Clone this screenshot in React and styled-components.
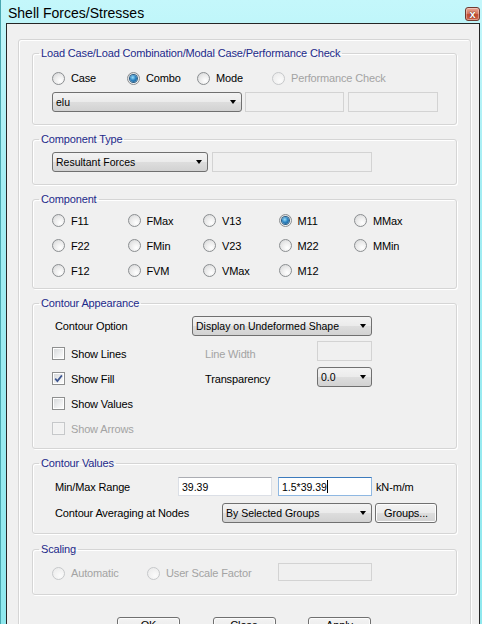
import React from 'react';
import styled, { createGlobalStyle } from 'styled-components';

const GlobalStyle = createGlobalStyle`
  html, body { margin: 0; padding: 0; }
  body {
    width: 482px;
    height: 624px;
    overflow: hidden;
    background: #a8eef3;
    font-family: "Liberation Sans", Arial, sans-serif;
    font-size: 11px;
    color: #000;
  }
`;

const Window = styled.div`
  width: 482px;
  height: 624px;
  box-sizing: border-box;
  border-left: 1px solid #4aa7b0;
  padding: 0 2px 0 5px;
  background: linear-gradient(180deg, #c4f7fb 0%, #a3edf3 30%, #8fe8ee 100%);
  display: flex;
  flex-direction: column;
  overflow: hidden;
`;

const TitleBar = styled.div`
  height: 23px;
  flex: none;
  display: flex;
  justify-content: space-between;
  align-items: flex-start;
  padding-left: 2px;
`;

const Title = styled.div`
  font-size: 14px;
  line-height: 16px;
  padding-top: 5px;
`;

const CloseBtn = styled.div`
  margin-top: 7px;
  width: 15px;
  height: 14px;
  box-sizing: border-box;
  border: 1px solid #6f3a30;
  border-radius: 3px;
  background: linear-gradient(180deg, #e9a693 0%, #d77a63 45%, #c24a30 55%, #cf6a50 100%);
  box-shadow: inset 0 0 0 1px rgba(255, 255, 255, 0.35);
  color: #fff;
  font-size: 11px;
  font-weight: bold;
  line-height: 12px;
  text-align: center;
  text-shadow: 0 0 1px #5a1c12, 0 0 1px #5a1c12;
`;

const Client = styled.div`
  flex: 1;
  min-height: 0;
  background: #f0f0f0;
  border: 1px solid #262626;
  border-bottom: none;
  padding: 15px 0 0 11px;
  overflow: hidden;
`;

const Panel = styled.div`
  width: 453px;
  height: 700px;
  box-sizing: border-box;
  border: 1px solid #d5d5d5;
  border-radius: 3px;
  box-shadow: inset 1px 1px 0 #fff, 1px 1px 0 #fff;
  padding: 6px 13px 0 13px;
  display: flex;
  flex-direction: column;
  gap: 7px;
`;

const Field = styled.fieldset`
  margin: ${p => p.mt || 0}px 0 0 0;
  padding: 0;
  min-width: 0;
  width: 425px;
  height: ${p => p.h}px;
  box-sizing: border-box;
  border: 1px solid #d5d5d5;
  border-radius: 3px;
  box-shadow: inset 1px 1px 0 #fff, 1px 1px 0 #fff;
`;

const Legend = styled.legend`
  margin-left: 6px;
  padding: 0 2px;
  color: #1d2a8a;
  font-size: 11px;
  line-height: 14px;
  letter-spacing: -0.15px;
`;

const Body = styled.div`
  padding-left: 19px;
  display: flex;
  flex-direction: column;
`;

const Row = styled.div`
  display: flex;
  align-items: center;
  height: ${p => p.h}px;
  margin-top: ${p => p.mt || 0}px;
`;

const Label = styled.span`
  flex: none;
  width: ${p => (p.w ? `${p.w}px` : 'auto')};
  box-sizing: border-box;
  padding-left: ${p => p.pl || 0}px;
  margin-left: ${p => p.ml || 0}px;
  color: ${p => (p.disabled ? '#a3a3a3' : '#000')};
  letter-spacing: -0.15px;
  white-space: nowrap;
`;

const RadioWrap = styled.label`
  flex: none;
  display: flex;
  align-items: center;
  gap: 6px;
  width: ${p => (p.w ? `${p.w}px` : 'auto')};
  height: 16px;
  color: ${p => (p.disabled ? '#a3a3a3' : '#000')};
  letter-spacing: -0.15px;
  white-space: nowrap;
`;

const RadioCircle = styled.span`
  flex: none;
  width: 13px;
  height: 13px;
  box-sizing: border-box;
  border-radius: 50%;
  border: 1px solid ${p => (p.disabled ? '#c6c8ca' : '#8b8e91')};
  background: ${p =>
    p.disabled
      ? 'radial-gradient(circle at 65% 70%, #fbfbfb 0%, #eeeeee 70%)'
      : 'radial-gradient(circle at 65% 70%, #ffffff 0%, #e9e9e9 55%, #cfd1d3 100%)'};
  display: flex;
  align-items: center;
  justify-content: center;

  &::after {
    content: '';
    display: ${p => (p.checked ? 'block' : 'none')};
    width: 7px;
    height: 7px;
    border-radius: 50%;
    background: radial-gradient(circle at 40% 35%, #9be0fb 0%, #2f86c4 45%, #124f80 100%);
    box-shadow: 0 0 0 1px #2a5d85;
  }
`;

const Radio = ({ w, checked, disabled, label }) => (
  <RadioWrap w={w} disabled={disabled}>
    <RadioCircle checked={checked} disabled={disabled} />
    {label}
  </RadioWrap>
);

const CheckWrap = styled.label`
  display: flex;
  align-items: center;
  gap: 6px;
  height: 25px;
  color: ${p => (p.disabled ? '#a3a3a3' : '#000')};
  letter-spacing: -0.15px;
  white-space: nowrap;
`;

const CheckBox = styled.span`
  flex: none;
  width: 13px;
  height: 13px;
  box-sizing: border-box;
  border: 1px solid ${p => (p.disabled ? '#c6c8ca' : '#8e8f8f')};
  background: ${p => (p.disabled ? '#f4f4f4' : '#fff')};
  padding: 1px;
  display: flex;

  & > span {
    flex: 1;
    position: relative;
    background: ${p =>
      p.disabled ? '#f2f2f2' : 'linear-gradient(135deg, #d8dadc 0%, #eeeff0 60%, #fbfbfb 100%)'};
  }

  & svg {
    position: absolute;
    left: -1px;
    top: -1px;
  }
`;

const Check = ({ checked, disabled, label }) => (
  <CheckWrap disabled={disabled}>
    <CheckBox disabled={disabled}>
      <span>
        {checked && (
          <svg width="11" height="11" viewBox="0 0 11 11">
            <path d="M2.2 5.6 L4.4 8.1 L8.9 2.4" fill="none" stroke="#3e5690" strokeWidth="1.7" />
          </svg>
        )}
      </span>
    </CheckBox>
    {label}
  </CheckWrap>
);

const Combo = styled.div`
  flex: none;
  width: ${p => p.w}px;
  height: 20px;
  margin-left: ${p => p.ml || 0}px;
  margin-top: ${p => p.mt || 0}px;
  box-sizing: border-box;
  border: 1px solid #707070;
  border-radius: 3px;
  background: linear-gradient(180deg, #f3f3f3 0%, #ebebeb 48%, #dddddd 52%, #d2d2d2 100%);
  display: flex;
  align-items: center;
  justify-content: space-between;
  padding: 0 5px 0 3px;
  font-size: 10.5px;
  white-space: nowrap;
  align-self: ${p => p.self || 'auto'};

  &::after {
    content: '';
    border-left: 3.5px solid transparent;
    border-right: 3.5px solid transparent;
    border-top: 4px solid #000;
  }
`;

const TextBox = styled.div`
  flex: none;
  width: ${p => p.w}px;
  height: ${p => p.h || 20}px;
  margin-left: ${p => p.ml || 0}px;
  box-sizing: border-box;
  border: 1px solid #d3d3d3;
  background: #f0f0f0;
  align-self: ${p => p.self || 'auto'};
`;

const Input = styled.div`
  flex: none;
  width: ${p => p.w}px;
  height: 19px;
  margin-left: ${p => p.ml || 0}px;
  box-sizing: border-box;
  border: 1px solid ${p => (p.focus ? '#8fb8e2' : '#dbdfe6')};
  border-top-color: ${p => (p.focus ? '#3d7bbd' : '#abadb3')};
  background: #fff;
  padding-left: 3px;
  display: flex;
  align-items: center;
  font-size: 10.5px;
`;

const Caret = styled.span`
  width: 1px;
  height: 13px;
  background: #000;
`;

const Button = styled.div`
  flex: none;
  width: ${p => p.w}px;
  height: ${p => p.h || 20}px;
  margin-left: ${p => p.ml || 0}px;
  box-sizing: border-box;
  border: 1px solid #707070;
  border-radius: 3px;
  background: linear-gradient(180deg, #f3f3f3 0%, #ebebeb 48%, #dddddd 52%, #d2d2d2 100%);
  box-shadow: inset 0 0 0 1px #fcfcfc;
  display: flex;
  align-items: ${p => (p.top ? 'flex-start' : 'center')};
  padding-top: ${p => (p.top ? 1 : 0)}px;
  justify-content: center;
  letter-spacing: -0.15px;
`;

const CompGrid = styled.div`
  margin-top: 2px;
  display: grid;
  grid-template-columns: repeat(5, 75.5px);
  grid-auto-rows: 25px;
  align-items: center;
`;

const AppearGrid = styled.div`
  margin-top: 5px;
  display: grid;
  grid-template-columns: 153px 112px 55px;
  grid-template-rows: repeat(4, 25px);
  align-items: center;
`;

const ButtonRow = styled.div`
  margin-top: 15px;
  padding-left: 85px;
  display: flex;
  gap: 32.5px;
`;

const components = [
  ['F11', 'FMax', 'V13', 'M11', 'MMax'],
  ['F22', 'FMin', 'V23', 'M22', 'MMin'],
  ['F12', 'FVM', 'VMax', 'M12', null],
];

export default function App() {
  return (
    <>
      <GlobalStyle />
      <Window>
        <TitleBar>
          <Title>Shell Forces/Stresses</Title>
          <CloseBtn>x</CloseBtn>
        </TitleBar>
        <Client>
          <Panel>
            <Field h={79}>
              <Legend>Load Case/Load Combination/Modal Case/Performance Check</Legend>
              <Body>
                <Row mt={10} h={16}>
                  <Radio w={75} label="Case" />
                  <Radio w={70} checked label="Combo" />
                  <Radio w={75} label="Mode" />
                  <Radio disabled label="Performance Check" />
                </Row>
                <Row mt={6} h={20}>
                  <Combo w={190}>elu</Combo>
                  <TextBox w={99} ml={3} />
                  <TextBox w={90} ml={4} />
                </Row>
              </Body>
            </Field>

            <Field h={53}>
              <Legend>Component Type</Legend>
              <Body>
                <Row mt={6} h={20}>
                  <Combo w={156}>Resultant Forces</Combo>
                  <TextBox w={160} ml={4} />
                </Row>
              </Body>
            </Field>

            <Field h={97}>
              <Legend>Component</Legend>
              <Body>
                <CompGrid>
                  {components.flat().map((c, i) =>
                    c ? <Radio key={i} label={c} checked={c === 'M11'} /> : <span key={i} />
                  )}
                </CompGrid>
              </Body>
            </Field>

            <Field h={153}>
              <Legend>Contour Appearance</Legend>
              <Body>
                <Row mt={6} h={20}>
                  <Label w={140} pl={3}>Contour Option</Label>
                  <Combo w={180}>Display on Undeformed Shape</Combo>
                </Row>
                <AppearGrid>
                  <Check label="Show Lines" />
                  <Label disabled>Line Width</Label>
                  <TextBox w={55} self="start" />
                  <Check checked label="Show Fill" />
                  <Label>Transparency</Label>
                  <Combo w={55} mt={1} self="start">0.0</Combo>
                  <Check label="Show Values" />
                  <span />
                  <span />
                  <Check disabled label="Show Arrows" />
                </AppearGrid>
              </Body>
            </Field>

            <Field h={78}>
              <Legend>Contour Values</Legend>
              <Body>
                <Row mt={7} h={19}>
                  <Label w={126} pl={3}>Min/Max Range</Label>
                  <Input w={94}>39.39</Input>
                  <Input w={94} ml={6} focus>
                    1.5*39.39<Caret />
                  </Input>
                  <Label ml={4}>kN-m/m</Label>
                </Row>
                <Row mt={7} h={20}>
                  <Label w={170} pl={3}>Contour Averaging at Nodes</Label>
                  <Combo w={150}>By Selected Groups</Combo>
                  <Button w={62} ml={3}>Groups...</Button>
                </Row>
              </Body>
            </Field>

            <Field h={53} mt={1}>
              <Legend>Scaling</Legend>
              <Body>
                <Row mt={7} h={20}>
                  <Radio w={95} disabled label="Automatic" />
                  <Radio w={131} disabled label="User Scale Factor" />
                  <TextBox w={94} h={18} self="start" />
                </Row>
              </Body>
            </Field>

            <ButtonRow>
              <Button w={63} h={23} top>OK</Button>
              <Button w={63} h={23} top>Close</Button>
              <Button w={63} h={23} top>Apply</Button>
            </ButtonRow>
          </Panel>
        </Client>
      </Window>
    </>
  );
}
